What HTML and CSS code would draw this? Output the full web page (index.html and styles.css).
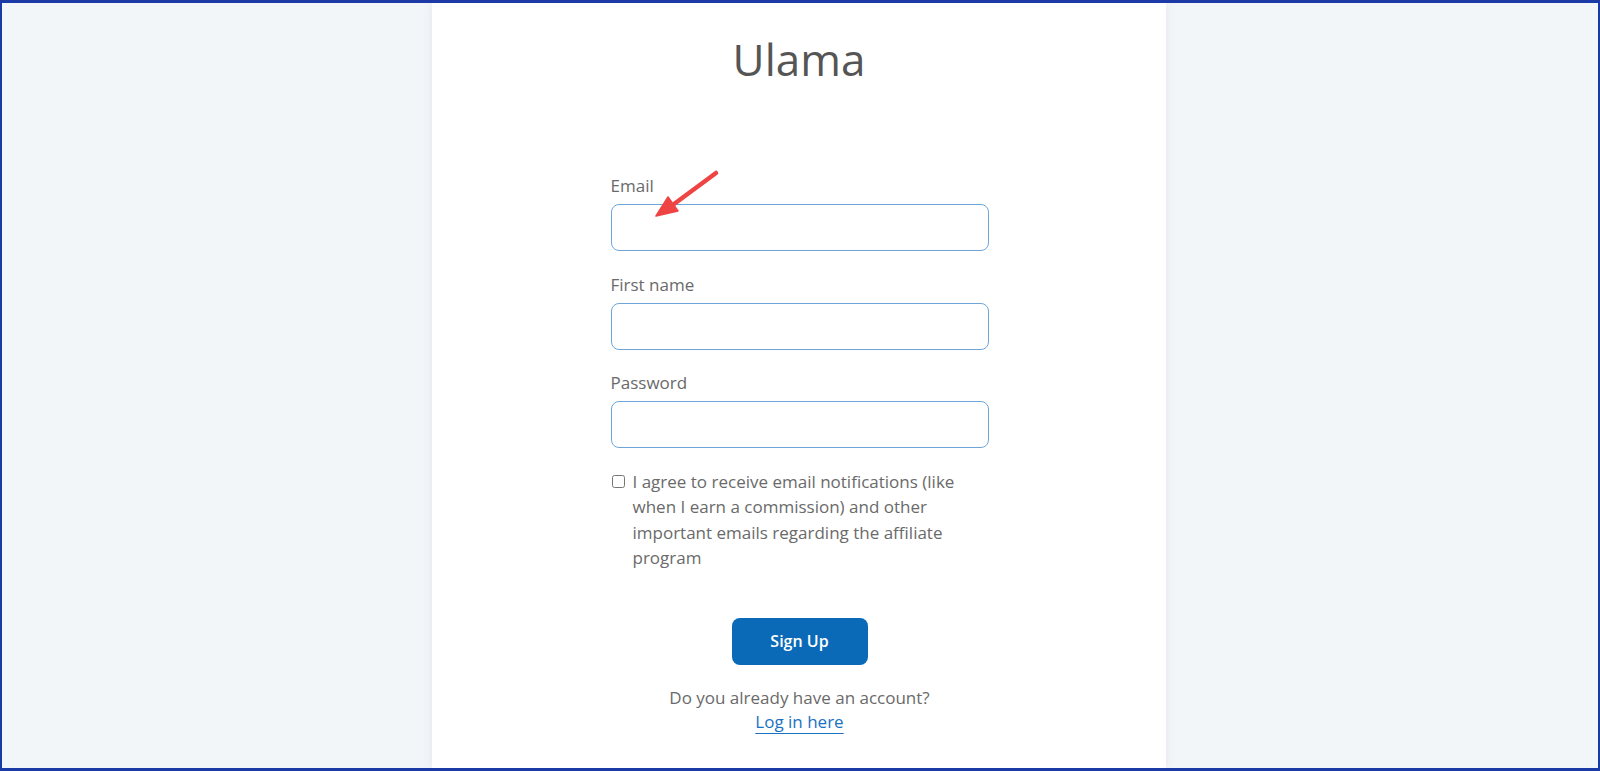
FILE: index.html
```html
<!DOCTYPE html>
<html lang="en">
<head>
  <meta charset="UTF-8">
  <title>Ulama - Sign Up</title>
  <link rel="stylesheet" href="styles.css">
</head>
<body>
  <div class="frame">
    <div class="card">
      <h1 class="brand">Ulama</h1>

      <form class="signup-form">
        <div class="field">
          <label for="email">Email</label>
          <input id="email" type="email">
        </div>
        <div class="field">
          <label for="first-name">First name</label>
          <input id="first-name" type="text">
        </div>
        <div class="field">
          <label for="password">Password</label>
          <input id="password" type="password">
        </div>

        <label class="consent">
          <input type="checkbox" class="consent-box">
          <span>I agree to receive email notifications (like when I earn a commission) and other important emails regarding the affiliate program</span>
        </label>

        <div class="actions">
          <button type="button" class="btn-primary">Sign Up</button>
          <p class="login-hint">Do you already have an account?<br><a href="#">Log in here</a></p>
        </div>
      </form>
    </div>

    <!-- annotation arrow pointing at the email field -->
    <svg class="annotation" width="1600" height="771" viewBox="0 0 1600 771">
      <line x1="716" y1="173" x2="670" y2="207" stroke="#ef4444" stroke-width="4.5" stroke-linecap="round"/>
      <polygon points="656,216 668,197 678,211" fill="#ef4444" stroke="#ef4444" stroke-width="1.5" stroke-linejoin="round"/>
    </svg>
  </div>
</body>
</html>
```

FILE: styles.css
```css
body {
  margin: 0;
  font-family: "Open Sans", "Liberation Sans", sans-serif;
  color: #6a6a6a;
}

.frame {
  position: relative;
  box-sizing: border-box;
  height: 771px;
  border: 2px solid #1b3aa6;
  border-top-width: 3px;
  border-bottom-width: 3px;
  background-color: #f3f6f9;
  display: flex;
  justify-content: center;
  overflow: hidden;
}

.card {
  width: 734px;
  margin-left: -2px;
  background-color: #ffffff;
  box-shadow: 0 0 10px rgba(30, 50, 80, 0.08);
  display: flex;
  flex-direction: column;
  align-items: center;
}

.brand {
  margin: 28px 0 0;
  font-size: 44px;
  font-weight: 400;
  line-height: 56px;
  color: #555;
}

.signup-form {
  width: 378px;
  margin-top: 87px;
  margin-left: 1px;
}

.field {
  display: flex;
  flex-direction: column;
  margin-bottom: 21.5px;
}

.field label {
  font-size: 17px;
  line-height: 24px;
  margin-bottom: 6px;
}

.field input {
  box-sizing: border-box;
  height: 47px;
  width: 100%;
  border: 1px solid #6fa6da;
  border-radius: 8px;
  background: #fff;
  font: inherit;
  padding: 0 12px;
}

.consent {
  display: flex;
  align-items: flex-start;
  gap: 8px;
  font-size: 17px;
  line-height: 25.5px;
  margin-top: -1px;
}

.consent-box {
  margin: 6px 0 0 1px;
  width: 13px;
  height: 13px;
  flex-shrink: 0;
}

.actions {
  display: flex;
  flex-direction: column;
  align-items: center;
  margin-top: 47px;
}

.btn-primary {
  width: 136px;
  height: 47px;
  border: none;
  border-radius: 8px;
  background-color: #0a6ab7;
  color: #fff;
  font-family: inherit;
  font-size: 16px;
  font-weight: 600;
  cursor: pointer;
}

.login-hint {
  margin: 21px 0 0;
  text-align: center;
  font-size: 17px;
  line-height: 24px;
}

.login-hint a {
  color: #1a72c2;
  text-decoration: underline;
  text-decoration-thickness: 1px;
  text-underline-offset: 5px;
}

.annotation {
  position: absolute;
  left: -2px;
  top: -3px;
  pointer-events: none;
}
```
